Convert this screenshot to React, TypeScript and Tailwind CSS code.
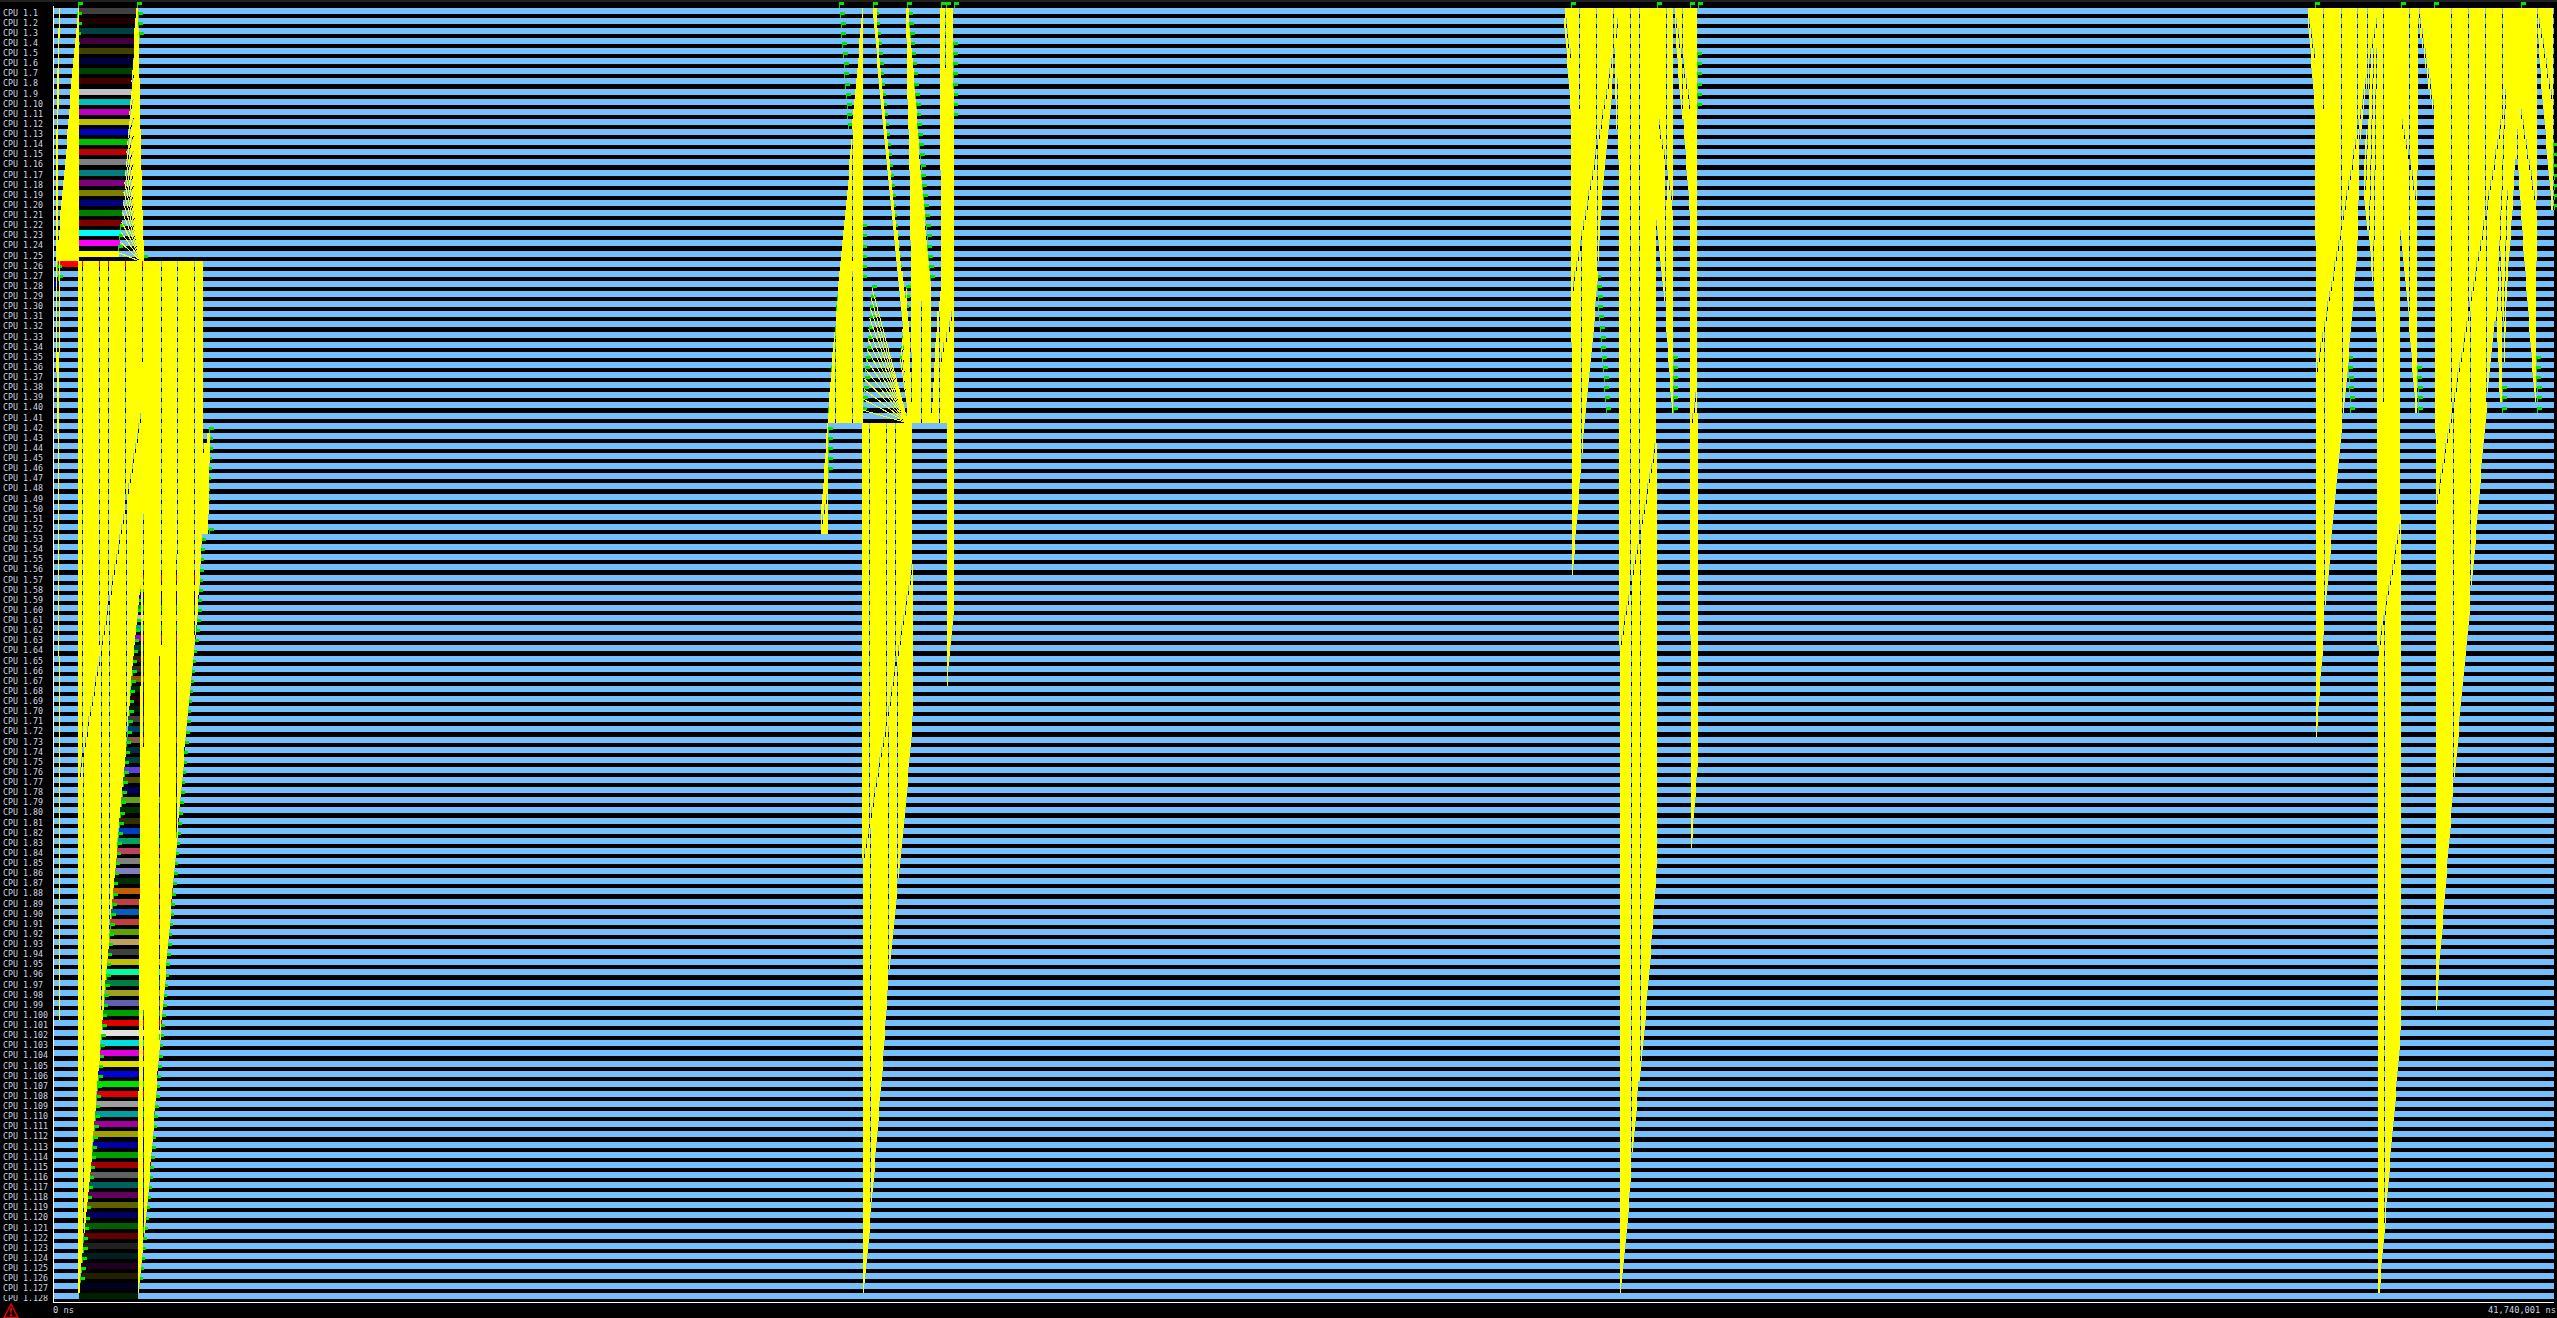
type Pt = [number, number];

const ROWS = 128;
const rowTop = (r: number) => Math.round(7.5 + r * 10.125);

// the zoomed crops were 3x wide and 1568/1300 tall, so shapes are noted in crop coords
const crop = (ox: number, pts: number[][]): Pt[] => pts.map(([x, y]) => [ox + x / 3, y / 1.206]);
const crop1 = (pts: number[][]): Pt[] => pts.map(([x, y]) => [50 + x / 3, 240 + y / 1.479]);

// one rect per row, the trace draws every slice as a full row tall block
function stairs(poly: Pt[]) {
  let d = "";
  for (let r = 0; r < ROWS; r++) {
    const yc = rowTop(r) + 5;
    const xs: number[] = [];
    poly.forEach(([x0, y0], i) => {
      const [x1, y1] = poly[(i + 1) % poly.length];
      if (y0 <= yc !== y1 <= yc) xs.push(x0 + ((yc - y0) / (y1 - y0)) * (x1 - x0));
    });
    xs.sort((a, b) => a - b);
    for (let i = 0; i + 1 < xs.length; i += 2) {
      const a = Math.round(xs[i]);
      const b = Math.round(xs[i + 1]);
      if (b > a) d += `M${a} ${rowTop(r)}H${b}V${rowTop(r + 1)}H${a}Z`;
    }
  }
  return d;
}

function gapLine([x0, y0]: Pt, [x1, y1]: Pt) {
  let d = "";
  for (let r = 0; r < ROWS; r++) {
    const yc = rowTop(r) + 5;
    if (yc < Math.min(y0, y1) || yc > Math.max(y0, y1)) continue;
    const x = Math.round(x0 + ((yc - y0) / (y1 - y0 || 1)) * (x1 - x0));
    d += `M${x} ${rowTop(r)}h1V${rowTop(r + 1)}h-1Z`;
  }
  return d;
}

const edgeX = (edge: Pt[], y: number) => {
  for (let i = 0; i + 1 < edge.length; i++) {
    const [x0, y0] = edge[i];
    const [x1, y1] = edge[i + 1];
    if (y >= y0 && y <= y1) return x0 + ((y - y0) / (y1 - y0 || 1)) * (x1 - x0);
  }
  return edge[y < edge[0][1] ? 0 : edge.length - 1][0];
};

const flag = (x: number, r: number) => {
  const fx = Math.round(x);
  return `M${fx} ${rowTop(r) - 6}h5v3h-4v3h-1Z`;
};

const flagRun = (x0: number, r0: number, x1: number, r1: number) => {
  let d = "";
  for (let r = r0; r <= r1; r++) d += flag(x0 + ((r - r0) / (r1 - r0 || 1)) * (x1 - x0), r);
  return d;
};

const tier = (v: string, n = 7) =>
  [`#${v}${v}${v}`, `#00${v}${v}`, `#${v}00${v}`, `#${v}${v}00`, `#0000${v}`, `#00${v}00`, `#${v}0000`].slice(0, n);

const topColors = [
  "#404040", "#200000", "#004040", "#400040", "#404000", "#000040", "#004000", "#400000",
  ...tier("c0"),
  ...tier("80"),
  "#00ffff", "#ff00ff", "#ffff00", "#ff0000",
];

const lowColors = [
  "#e00000", "#e0e000", "#0000e0", "#00a000", "#c0c0c0", "#00a0a0", "#a000e0", "#004040", "#402000",
  "#303030", "#806000", "#003000", "#200000", "#002000", "#404040", "#004060", "#806040", "#003040",
  "#004040", "#6040e0", "#505000", "#000060", "#60a020", "#003000", "#303000", "#0040c0", "#00a060",
  "#c04060", "#808080", "#8080c0", "#003000", "#c06000", "#c04040", "#0060c0", "#c04040", "#60a000",
  "#c0a060", "#404040", "#c0c000", "#00ffa0", "#008040", "#a0a020", "#6060b0", "#00a000", "#e00000",
  ...tier("e0"),
  ...tier("a0"),
  ...tier("60"),
  ...tier("20", 6),
];

// first burst
const rightEdge: Pt[] = [[202, 537], [197, 625], [190, 686], [182, 781], [175, 862], [163, 1004], [150, 1173], [138, 1295]];
const leftEdge: Pt[] = [[141, 578], [133, 659], [125, 761], [117, 848], [108, 950], [100, 1051], [92, 1153], [83, 1247], [79, 1295]];
const upperLeft: Pt[] = [[78, 8], [73, 60], [67, 140], [60, 220], [57, 262]];

const yellow: Pt[][] = [
  [[78, 262], [203, 262], [203, 450], [210, 430], [209, 500], [208, 532], ...rightEdge, [138, 1190], [139, 1000], [140, 800], ...leftEdge, [78, 1295]],
  [...upperLeft, [79, 262], [79, 8]],
  [[136, 8], [138, 8], [140, 100], [142, 200], [144, 258], [141, 262], [136, 200], [134, 120], [134, 40]],
  [[59, 8], [60, 8], [60, 40], [59, 40], [59, 105], [58, 105], [58, 262], [56, 262], [56, 150], [57, 105], [58, 40]],
  [[56, 262], [57, 262], [57, 368], [56, 368]],
  [[59, 262], [60, 262], [60, 352], [59, 352]],
  [[57, 352], [59, 352], [59, 652], [58, 652], [58, 436], [57, 436]],
  [[59, 652], [60, 652], [60, 1020], [59, 1020]],

  // second burst
  ...[
    [[187, 12], [189, 12], [189, 510], [84, 510], [84, 645], [60, 640], [82, 510], [95, 440], [108, 385], [120, 320], [140, 240], [160, 136]],
    [[220, 12], [229, 12], [245, 100], [270, 200], [300, 310], [328, 395], [336, 510], [322, 510], [310, 400], [285, 300], [262, 200], [240, 110], [222, 30]],
    [[318, 12], [325, 12], [340, 80], [360, 200], [392, 340], [392, 510], [336, 510], [333, 340], [328, 190], [322, 115]],
    [[420, 12], [460, 12], [462, 365], [462, 730], [442, 825], [441, 510], [393, 510], [412, 380], [424, 350], [422, 260]],
    [[186, 510], [336, 510], [336, 680], [339, 680], [339, 850], [335, 880], [320, 960], [300, 1035], [290, 1085], [262, 1200], [250, 1275], [215, 1450], [192, 1560], [189, 1560], [188, 1035], [186, 1035]],
  ].map((p) => crop(800, p)),

  // third burst
  ...[
    [[40, 10], [190, 10], [190, 60], [185, 120], [165, 200], [150, 270], [145, 325], [130, 400], [108, 490], [92, 570], [80, 630], [67, 695], [64, 350], [62, 130]],
    [[192, 10], [207, 10], [207, 215], [200, 160], [195, 100]],
    [[207, 10], [370, 10], [370, 250], [369, 495], [366, 495], [345, 370], [320, 265], [318, 265], [318, 525], [321, 525], [321, 1045], [318, 1060], [300, 1160], [275, 1280], [265, 1310], [245, 1400], [235, 1460], [212, 1560], [210, 1560], [210, 780], [207, 780]],
    [[373, 10], [441, 10], [441, 465], [444, 520], [444, 920], [436, 960], [425, 1020], [423, 1020], [420, 515], [420, 260], [400, 145], [393, 130], [373, 20]],
  ].map((p) => crop(1550, p)),

  // fourth burst
  ...[
    [[22, 10], [200, 10], [200, 100], [180, 170], [175, 250], [172, 300], [150, 410], [135, 480], [125, 520], [105, 600], [75, 740], [70, 770], [50, 885], [48, 885], [48, 450], [45, 135]],
    [[202, 10], [232, 10], [232, 410], [225, 370], [210, 300], [190, 230], [195, 170], [205, 130]],
    [[232, 10], [355, 10], [352, 250], [352, 500], [348, 500], [325, 375], [300, 265], [300, 625], [303, 625], [303, 1240], [285, 1330], [255, 1475], [238, 1560], [235, 1560], [234, 780], [232, 780]],
    [[355, 10], [712, 10], [710, 250], [708, 495], [704, 480], [680, 350], [655, 210], [645, 185], [640, 240], [620, 350], [610, 490], [600, 490], [590, 380], [580, 400], [560, 490], [510, 730], [460, 950], [415, 1180], [411, 1215], [408, 1215], [407, 610], [405, 250], [402, 135], [385, 100], [355, 25]],
    [[712, 10], [760, 10], [760, 255], [756, 255], [720, 80]],
  ].map((p) => crop(2300, p)),
];

const gaps: [Pt, Pt][] = [];
const addGaps = (conv: (pts: number[][]) => Pt[], list: number[][]) =>
  list.forEach(([x0, y0, x1, y1]) => {
    const [a, b] = conv([[x0, y0], [x1, y1]]);
    gaps.push([a, b]);
  });

addGaps(crop1, [
  [97, 32, 97, 760], [100, 760, 100, 1500], [148, 32, 148, 600], [152, 600, 152, 1140],
  [175, 32, 175, 540], [178, 540, 178, 1020], [226, 32, 226, 385], [229, 385, 229, 740],
  [277, 32, 277, 185], [280, 400, 280, 750], [278, 1135, 278, 1480], [332, 32, 332, 600],
  [328, 615, 328, 1180], [380, 32, 380, 460], [378, 460, 378, 880], [433, 32, 433, 305],
  [431, 305, 431, 590], [275, 250, 88, 790],
]);
addGaps((p) => crop(800, p), [
  [157, 150, 157, 320], [157, 325, 157, 510], [106, 380, 106, 510], [416, 380, 416, 510],
  [436, 12, 436, 80], [460, 370, 417, 440], [362, 360, 362, 505], [82, 590, 60, 640],
  [208, 510, 208, 1000], [211, 1000, 211, 1450], [259, 510, 259, 870], [263, 870, 263, 1205],
  [286, 510, 286, 800], [290, 800, 290, 1085], [337, 680, 190, 1035],
]);
addGaps((p) => crop(1550, p), [
  [88, 10, 88, 130], [92, 290, 92, 570], [139, 10, 139, 175], [142, 175, 142, 330], [190, 10, 190, 60],
  [241, 10, 241, 710], [244, 710, 244, 1400], [268, 10, 268, 640], [271, 640, 271, 1280],
  [347, 10, 347, 240], [344, 190, 344, 370], [397, 10, 397, 130], [66, 350, 190, 60],
  [207, 785, 320, 525], [322, 140, 368, 250], [373, 15, 420, 130], [441, 465, 422, 515], [42, 15, 62, 70],
  [197, 40, 205, 20], [200, 90, 203, 215],
]);
addGaps((p) => crop(2300, p), [
  [70, 10, 70, 135], [73, 390, 73, 765], [122, 10, 122, 270], [125, 285, 125, 520], [172, 10, 172, 150],
  [176, 150, 176, 275], [200, 10, 200, 100], [250, 10, 250, 490], [253, 740, 253, 1475],
  [328, 10, 328, 375], [454, 10, 454, 490], [458, 490, 458, 970], [505, 10, 505, 370], [509, 370, 509, 730],
  [556, 10, 556, 250], [559, 250, 559, 490], [607, 10, 607, 135], [48, 450, 230, 20], [233, 785, 302, 625],
  [303, 140, 352, 250], [356, 15, 402, 135], [407, 610, 607, 135], [660, 130, 708, 250], [715, 20, 755, 120],
  [22, 15, 45, 70], [210, 60, 195, 230], [220, 60, 205, 290], [228, 60, 218, 370], [615, 110, 590, 380],
  [620, 230, 605, 480], [600, 300, 610, 480], [650, 155, 655, 250],
]);

const flagPaths = [
  flagRun(78, 0, 60, 24), flagRun(137, 0, 139, 3), flagRun(120, 22, 118, 24), flag(143, 25),
  flag(57, 26), flag(58, 27), flagRun(209, 42, 204, 50), flag(209, 52),
  flagRun(839, 0, 848, 12), flagRun(862, 22, 862, 27), flagRun(838, 28, 828, 40), flagRun(828, 41, 828, 46),
  flagRun(873, 0, 897, 26), flagRun(907, 0, 930, 27), flagRun(941, 0, 944, 8), flag(946, 0),
  flag(954, 0), flagRun(953, 4, 953, 11), flagRun(872, 28, 862, 40), flagRun(906, 28, 900, 35),
  flag(1571, 0), flag(1657, 0), flag(1690, 0), flag(1698, 0), flagRun(1596, 27, 1606, 40),
  flagRun(1673, 35, 1673, 40), flagRun(1697, 5, 1697, 10),
  flag(2315, 0), flag(2401, 0), flag(2434, 0), flag(2521, 0), flagRun(2348, 35, 2350, 40),
  flagRun(2417, 36, 2418, 40), flagRun(2502, 38, 2502, 40), flagRun(2536, 35, 2537, 40), flagRun(2553, 14, 2554, 20),
];
for (let r = 52; r < 127; r++) flagPaths.push(flag(edgeX(rightEdge, rowTop(r)) - 1, r));
for (let r = 57; r < 127; r++) flagPaths.push(flag(edgeX(leftEdge, rowTop(r)), r));

const bars: { x: number; w: number; r: number; c: string }[] = [];
topColors.forEach((c, r) => {
  const y = rowTop(r);
  const x = Math.round(r === 25 ? 58 : edgeX(upperLeft, y));
  const end = Math.round(r === 25 ? 143 : 137 - r * 0.73);
  bars.push({ x, w: end - x, r, c });
});
lowColors.forEach((c, i) => {
  const r = 56 + i;
  const y = rowTop(r) + 3;
  const x = Math.round(edgeX(leftEdge, y));
  bars.push({ x, w: Math.round(edgeX(rightEdge, y)) - x, r, c });
});

const fans: [number, number, number, number][] = [];
for (let i = 0; i <= 12; i++) {
  const y = rowTop(28 + i) - 3;
  fans.push([872 - i * 0.83, y, 908, 423]);
}
for (let i = 0; i <= 7; i++) fans.push([906 - i * 0.8, rowTop(28 + i) - 3, 910, 423]);
for (let r = 0; r < 25; r++) fans.push([137 - r * 0.73, rowTop(r) + 2, 142, 262]);

function WarningIcon() {
  return (
    <svg width="16" height="16" viewBox="0 0 16 16" className="ml-[3px]">
      <path d="M8 1 L15 14.5 H1 Z" fill="none" stroke="#f00000" strokeWidth="1.4" />
      <path d="M7 5h2l-.3 5h-1.4ZM7 11h2v2h-2Z" fill="#f00000" />
    </svg>
  );
}

const labelClass = "h-[10.125px] shrink-0 pl-[3px] leading-[10.125px] whitespace-nowrap";

export default function App() {
  return (
    <div className="relative w-[2557px] h-[1318px] overflow-hidden bg-black font-['DejaVu_Sans_Mono',monospace] text-[8.3px] text-[#cfd8e3]">
      <div className="h-[2px] bg-[#222222]" />
      <div className="h-[4px]" />
      <div className="flex h-[1297px]">
        {/* cpu names */}
        <div className="w-[53px] shrink-0 overflow-hidden pt-[1.5px]">
          {Array.from({ length: ROWS - 1 }).map((_, i) => (
            <div key={i} className={labelClass}>
              CPU 1.{i + 1}
            </div>
          ))}
          <div className="mt-[2px] h-[8px] overflow-hidden pl-[3px] whitespace-nowrap">
            <div className="-mt-[2px] leading-[10.125px]">CPU 1.128</div>
          </div>
        </div>

        {/* timeline rows */}
        <div className="flex-1 mr-[3px] overflow-hidden border-l border-b border-white pt-[1.5px]">
          {Array.from({ length: ROWS }).map((_, i) => (
            <div key={i} className="h-[10.125px] shrink-0">
              <div className="h-[6px] bg-[#74c0ff]" />
            </div>
          ))}
        </div>
      </div>

      {/* footer */}
      <div className="flex h-[15px] items-center text-[8.7px]">
        <div className="flex w-[53px] shrink-0 items-center">
          <WarningIcon />
        </div>
        <span>0 ns</span>
        <span className="ml-auto pr-[1px]">41,740,001 ns</span>
      </div>

      {/* trace drawing */}
      <svg
        className="absolute top-0 left-0 pointer-events-none"
        width="2557"
        height="1318"
        viewBox="0 0 2557 1318"
        shapeRendering="crispEdges"
      >
        <defs>
          <mask id="slices" maskUnits="userSpaceOnUse" x="0" y="0" width="2557" height="1318">
            <rect width="2557" height="1318" fill="white" />
            <path d={gaps.map(([a, b]) => gapLine(a, b)).join("")} fill="black" />
          </mask>
        </defs>
        {bars.map((b) => (
          <rect key={b.r} x={b.x} y={rowTop(b.r)} width={b.w} height={6} fill={b.c} />
        ))}
        <rect x={54} y={rowTop(27)} width={6} height={6} fill="#0000c0" />
        <path d={flagPaths.join("")} fill="#00e600" />
        <path d={yellow.map(stairs).join("")} fill="#ffff00" mask="url(#slices)" />
        {fans.map(([x1, y1, x2, y2], i) => (
          <line key={i} x1={x1} y1={y1} x2={x2} y2={y2} stroke="#ffff00" strokeWidth="1" />
        ))}
      </svg>
    </div>
  );
}
